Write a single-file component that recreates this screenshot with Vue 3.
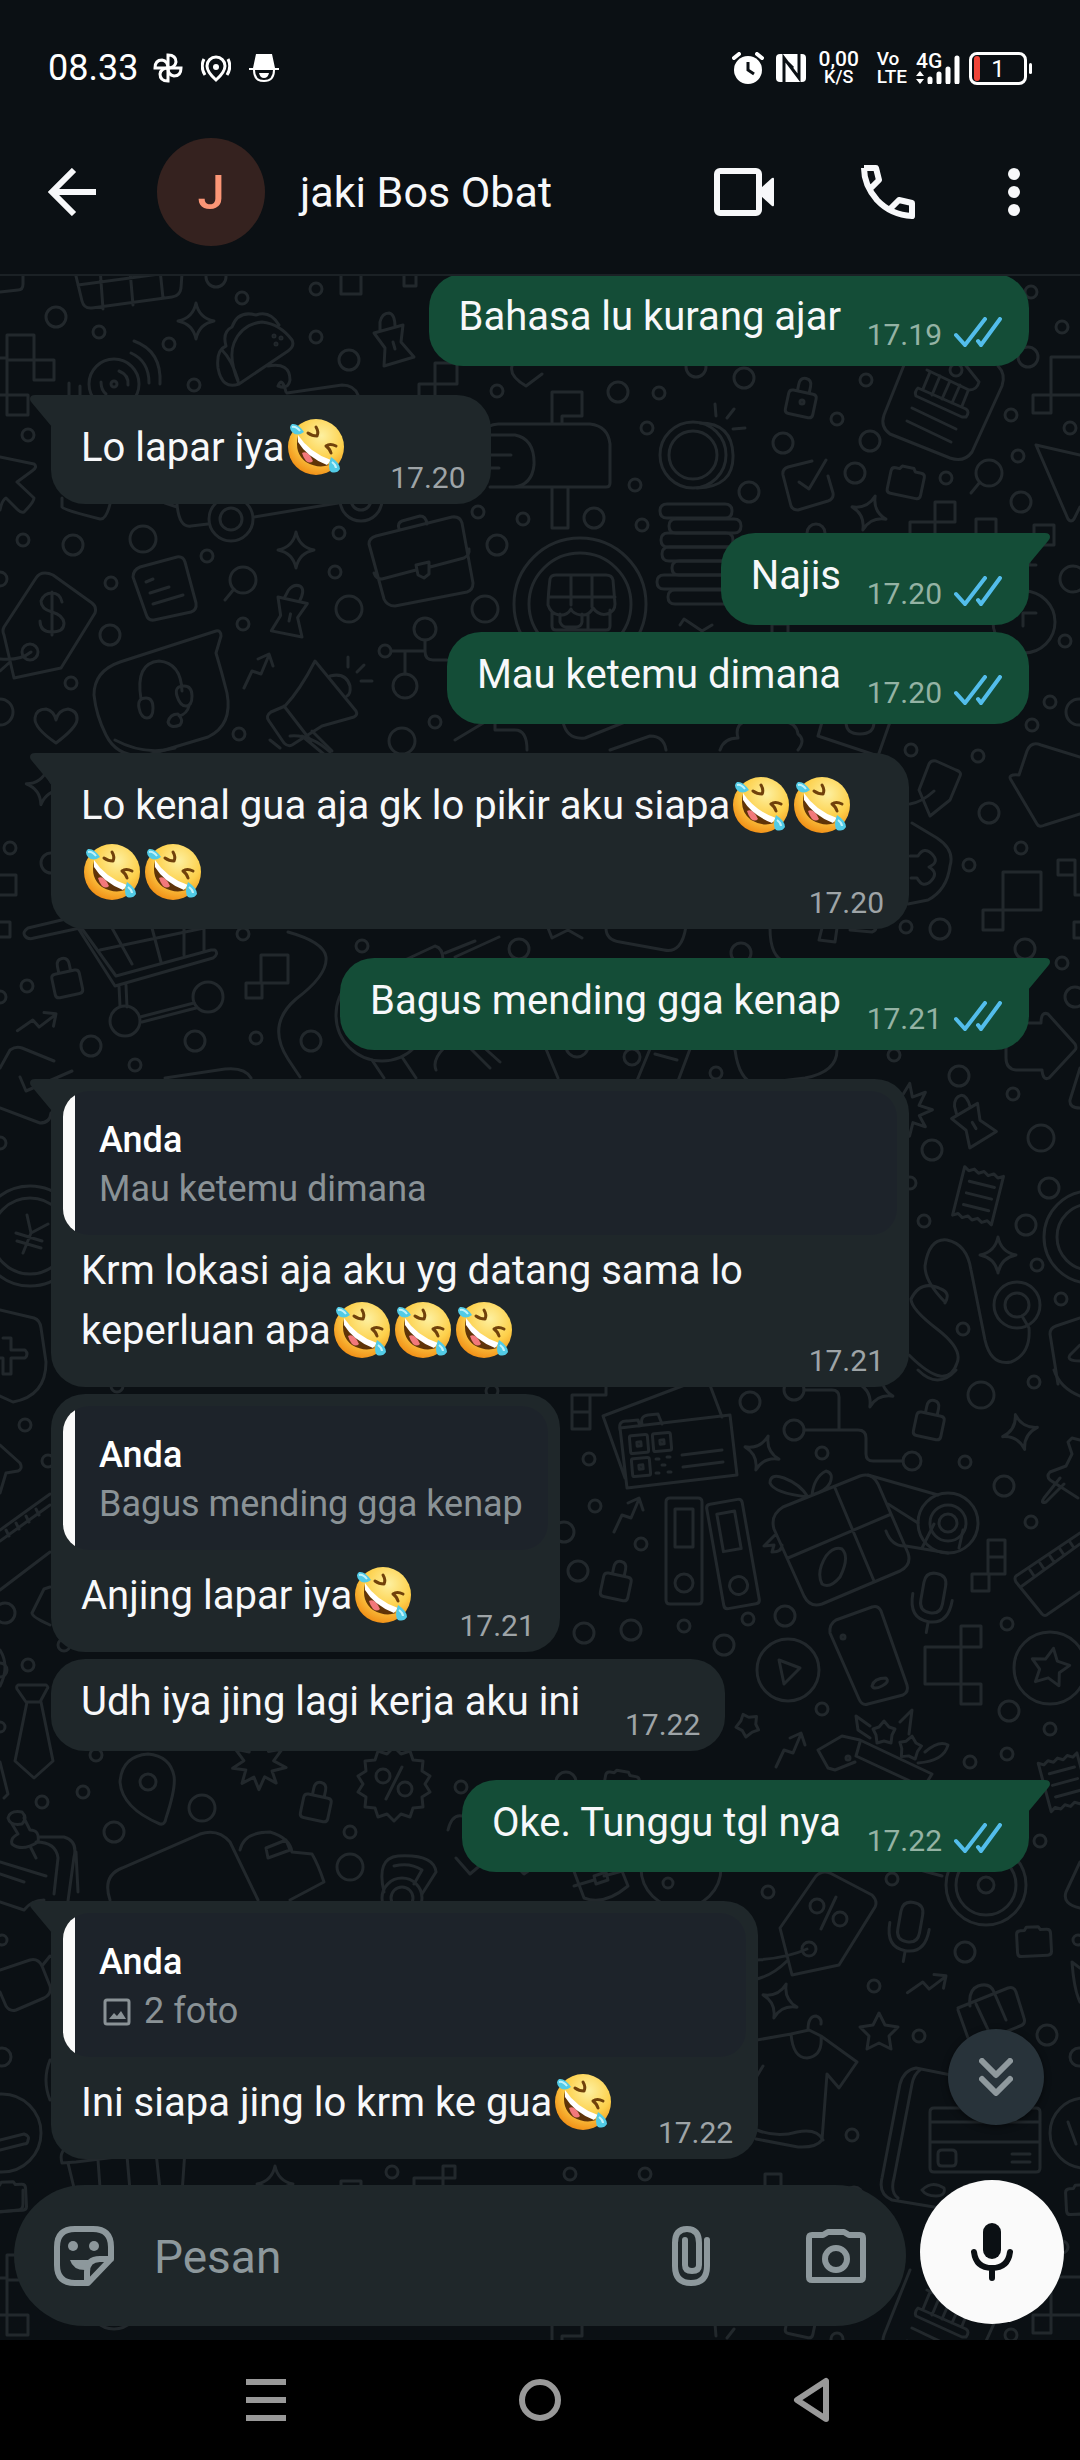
<template>
  <div class="app">
    <!-- STATUS BAR -->
    <div class="status-bar">
      <span class="clock">08.33</span>
      <svg class="status-icon" viewBox="0 0 30 30">
        <g fill="none" stroke="#fff" stroke-width="3">
          <path v-for="a in [0, 90, 180, 270]" :key="a" :transform="`rotate(${a} 15 15)`" d="M15 15V2Q23 2 23 9Q22 15 15 15" />
        </g>
      </svg>
      <svg class="status-icon" viewBox="0 0 30 30">
        <path d="M15 27Q6 19 6 13A9 9 0 0 1 24 13Q24 19 15 27ZM3 6Q-1 14 4 22M27 6Q31 14 26 22" fill="none" stroke="#fff" stroke-width="3" />
        <circle cx="15" cy="14" r="3" fill="#fff" />
      </svg>
      <svg class="status-icon" viewBox="0 0 30 30">
        <path d="M7 1H23L26 15H30V17H0V15H4ZM10 20H20Q19 25 15 25T10 20Z" fill="#fff" />
        <path d="M5 17Q5 28 15 28T25 17" fill="none" stroke="#fff" stroke-width="2" />
      </svg>
      <div class="status-right">
        <svg class="alarm" viewBox="0 0 32 32">
          <circle cx="16" cy="18" r="14" fill="#fff" />
          <path d="M2 6L7 2M30 6L25 2" stroke="#fff" stroke-width="4" stroke-linecap="round" />
          <path d="M16 10V18L22 22" fill="none" stroke="#0b1014" stroke-width="3" />
        </svg>
        <svg class="nfc" viewBox="0 0 30 28">
          <rect width="30" height="28" rx="4" fill="#fff" />
          <path d="M8 28V4L23 24V0M8 5L17 14" fill="none" stroke="#0b1014" stroke-width="3" />
        </svg>
        <div class="speed"><b>0,00</b><small>K/S</small></div>
        <div class="volte"><span>Vo</span><span>LTE</span></div>
        <div class="signal">
          <span>4G</span>
          <svg viewBox="0 0 44 32">
            <path d="M0 24L4 19L8 24ZM0 27L4 32L8 27Z" fill="#fff" />
            <path d="M14 27V30M23 22V30M32 17V30M41 6V30" stroke="#fff" stroke-width="5" stroke-linecap="round" />
          </svg>
        </div>
        <div class="battery"><i></i><span>1</span></div>
      </div>
    </div>

    <!-- HEADER -->
    <header class="header">
      <button type="button" class="back" aria-label="Kembali">
        <svg viewBox="0 0 48 48"><path d="M26 2L4 24L26 46M4 24H48" /></svg>
      </button>
      <div class="avatar">J</div>
      <h1>jaki Bos Obat</h1>
      <div class="actions">
        <button type="button" aria-label="Panggilan video">
          <svg class="video" viewBox="0 0 60 48">
            <rect x="3" y="3" width="42" height="42" rx="3" fill="none" stroke="#f7f8fa" stroke-width="6" />
            <path d="M47 20L58 10Q60 9 60 11V37Q60 39 58 38L47 28Z" fill="#f7f8fa" />
          </svg>
        </button>
        <button type="button" aria-label="Panggilan suara">
          <svg class="phone" viewBox="0 0 54 54">
            <path d="M3 3H15L18 15L9 24M3 3Q3 20 16 35Q30 50 51 51V38L38 35L30 43" fill="none" stroke="#f7f8fa" stroke-width="6" stroke-linejoin="round" />
          </svg>
        </button>
        <button type="button" aria-label="Menu">
          <svg class="dots" viewBox="0 0 24 48">
            <circle v-for="y in [6, 24, 42]" :key="y" cx="12" :cy="y" r="6" fill="#f7f8fa" />
          </svg>
        </button>
      </div>
    </header>

    <main class="chat">
      <!-- WALLPAPER -->
      <svg class="wallpaper" viewBox="0 276 1080 2064" preserveAspectRatio="xMinYMin slice" aria-hidden="true">
        <g id="tile">
          <circle v-for="(c, i) in circles" :key="'c' + i" :cx="c[0]" :cy="c[1]" :r="c[2]" />
          <path v-for="(s, i) in stamps" :key="'s' + i" :d="shapes[s[0]]" :transform="`translate(${s[1]} ${s[2]}) rotate(${s[3]})`" />
          <path v-for="(d, i) in drawings" :key="'d' + i" :d="d" />
        </g>
        <use href="#tile" y="1920" />
      </svg>

      <!-- MESSAGES -->
      <div class="messages">
        <div
          v-for="msg in messages"
          :key="msg.id"
          class="bubble"
          :class="[msg.out ? 'out' : 'in', { tail: msg.tail, tall: msg.tall, quoted: msg.quote }]"
        >
          <svg v-if="msg.tail" class="tip" viewBox="0 0 22 32">
            <path d="M22 0H5Q0 0 0 4Q0 6 2 8L22 32Z" />
          </svg>
          <div v-if="msg.quote" class="quote">
            <strong>Anda</strong>
            <span>
              <svg v-if="msg.photo" class="photo" viewBox="0 0 28 28">
                <rect x="2" y="2" width="24" height="24" rx="2" fill="none" stroke="currentColor" stroke-width="3" />
                <path d="M6 21L11 15L14 18L18 13L23 21Z" fill="currentColor" />
              </svg>{{ msg.quote }}
            </span>
          </div>
          <div class="body">
            <p>{{ msg.text }}<svg v-for="n in msg.laughs || 0" :key="n" class="emoji" viewBox="0 0 56 56" role="img" aria-label="tertawa">
                <circle cx="28" cy="28" r="28" fill="url(#face)" />
                <path d="M10 17Q6 34 18 43Q30 50 41 46Q24 36 10 17Z" fill="#5f3408" />
                <path d="M14 34Q20 31 25 42Q22 45 18 42Q15 38 14 34Z" fill="#f2787b" />
                <path d="M10 16Q22 34 43 41L39 46Q19 38 10 23Z" fill="#fff" />
                <path d="M28 8Q31 13 29 17Q24 17 20 14M48 27Q42 24 38 27Q42 30 43 34" fill="none" stroke="#70410b" stroke-width="3" stroke-linecap="round" stroke-linejoin="round" />
                <path d="M16 13Q10 4 4 5Q0 8 4 13Q9 18 16 13ZM43 38Q52 44 52 50Q49 55 43 53Q39 49 43 38Z" fill="#52cbe6" />
                <path d="M12 12Q8 7 4 8M44 43Q48 46 48 49" fill="none" stroke="#c2f3fb" stroke-width="2" />
              </svg><i class="spacer"></i></p>
            <div class="meta">
              <time>{{ msg.time }}</time>
              <svg v-if="msg.out" class="ticks" viewBox="0 0 48 30">
                <path d="M2 18L11 28L31 2M24 24L27 28L46 2" />
              </svg>
            </div>
          </div>
        </div>
      </div>

      <button type="button" class="scroll-down" aria-label="Ke bawah">
        <svg viewBox="0 0 34 38"><path d="M3 3L17 17L31 3M3 21L17 35L31 21" /></svg>
      </button>

      <!-- COMPOSER -->
      <form class="composer" @submit.prevent="send">
        <div class="field">
          <button type="button" aria-label="Stiker">
            <svg class="icon-60" viewBox="0 0 60 60">
              <path d="M21 3H39Q57 3 57 21V33L34 57H21Q3 57 3 39V21Q3 3 21 3ZM33 57V46Q33 33 46 33H57" />
              <circle class="solid" cx="19" cy="20" r="5" />
              <circle class="solid" cx="40" cy="20" r="5" />
              <path class="solid" d="M16 34H36Q31 38 31 44Q19 44 16 34Z" />
            </svg>
          </button>
          <input v-model="draft" type="text" placeholder="Pesan" aria-label="Pesan" />
          <button type="button" aria-label="Lampirkan">
            <svg class="clip" viewBox="0 0 38 60">
              <path d="M35 14V40Q35 57 19 57T3 40V17Q3 3 15 3T27 17V39Q27 45 20 45T13 39V14" />
            </svg>
          </button>
          <button type="button" aria-label="Kamera">
            <svg class="icon-60" viewBox="0 0 60 60">
              <path d="M3 12Q3 9 6 9H17L22 6H38L43 9H54Q57 9 57 12V51Q57 54 54 54H6Q3 54 3 51Z" />
              <circle cx="30" cy="33" r="11" />
            </svg>
          </button>
        </div>
        <button type="submit" class="mic" aria-label="Pesan suara">
          <svg viewBox="0 0 42 58">
            <rect x="12" width="18" height="36" rx="9" fill="#0b1014" />
            <path d="M3 29Q5 45 21 45T39 29M21 45V55" fill="none" stroke="#0b1014" stroke-width="6" stroke-linecap="round" />
          </svg>
        </button>
      </form>
    </main>

    <!-- NAVIGATION BAR -->
    <nav class="nav-bar">
      <button type="button" aria-label="Aplikasi terbaru">
        <svg viewBox="0 0 48 48"><path d="M4 6H44M4 24H44M4 42H44" /></svg>
      </button>
      <button type="button" aria-label="Beranda">
        <svg viewBox="0 0 48 48"><circle cx="24" cy="24" r="18" /></svg>
      </button>
      <button type="button" aria-label="Kembali ke sebelumnya">
        <svg viewBox="0 0 48 48"><path d="M36 5V43L7 24Z" /></svg>
      </button>
    </nav>

    <svg class="defs" aria-hidden="true">
      <radialGradient id="face" cx="0.6" cy="0.3" r="0.75">
        <stop offset="0" stop-color="#fdf0a0" />
        <stop offset="0.55" stop-color="#fdd04b" />
        <stop offset="1" stop-color="#f08a12" />
      </radialGradient>
    </svg>
  </div>
</template>

<script setup>
import { ref } from 'vue'

const draft = ref('')

const messages = ref([
  { id: 1, out: true, text: 'Bahasa lu kurang ajar', time: '17.19' },
  { id: 2, tail: true, tall: true, text: 'Lo lapar iya', laughs: 1, time: '17.20' },
  { id: 3, out: true, tail: true, text: 'Najis', time: '17.20' },
  { id: 4, out: true, text: 'Mau ketemu dimana', time: '17.20' },
  { id: 5, tail: true, tall: true, text: 'Lo kenal gua aja gk lo pikir aku siapa', laughs: 4, time: '17.20' },
  { id: 6, out: true, tail: true, text: 'Bagus mending gga kenap', time: '17.21' },
  { id: 7, tail: true, quote: 'Mau ketemu dimana', text: 'Krm lokasi aja aku yg datang sama lo keperluan apa', laughs: 3, time: '17.21' },
  { id: 8, tall: true, quote: 'Bagus mending gga kenap', text: 'Anjing lapar iya', laughs: 1, time: '17.21' },
  { id: 9, text: 'Udh iya jing lagi kerja aku ini', time: '17.22' },
  { id: 10, out: true, tail: true, text: 'Oke. Tunggu tgl nya', time: '17.22' },
  { id: 11, tail: true, tall: true, quote: '2 foto', photo: true, text: 'Ini siapa jing lo krm ke gua', laughs: 1, time: '17.22' }
])

function send() {
  const text = draft.value.trim()
  if (!text) return

  messages.value.push({ id: Date.now(), out: true, text, time: '08.33' })
  draft.value = ''
}

// closed zigzag with n tips
function burst(n, outer, inner) {
  let d = ''
  for (let i = 0; i < n * 2; i++) {
    const r = i % 2 ? inner : outer
    const a = (Math.PI * i) / n - Math.PI / 2
    d += (i ? 'L' : 'M') + Math.round(r * Math.cos(a)) + ' ' + Math.round(r * Math.sin(a))
  }
  return d + 'Z'
}

const shapes = {
  sparkle: 'M0-18Q3-3 18 0Q3 3 0 18Q-3 3-18 0Q-3-3 0-18Z',
  lock: 'M-10-6h20q4 0 4 4v16q0 4-4 4h-20q-4 0-4-4v-16q0-4 4-4zM-6-6v-7q0-7 6-7t6 7v7',
  trend: 'M-14 17L-6 0L3 3L11-16M0-12L11-17L15-5',
  pin: 'M-20-12L9-20L7-3L20 12L-10 21L-9 3ZM-14-15v-8q2-9 9-9q6 1 6 14M-1-3l2 7',
  lens: 'M13 0a13 13 0 1 0-26 0a13 13 0 1 0 26 0M-9 9L-18 20',
  pill: 'M-29-7h58q7 0 7 7t-7 7h-58q-7 0-7-7t7-7z',
  folder: 'M-16-8q0-4 4-4h4l2-3h12l2 3h6q4 0 4 4v18q0 4-4 4h-26q-4 0-4-4z',
  mic: 'M0-27q11 0 11 11v18q0 11-11 11t-11-11v-18q0-11 11-11zM-20-3q0 25 20 25t20-25M0 22v11',
  binder: 'M-14-53h28q4 0 4 4v98q0 4-4 4h-28q-4 0-4-4v-98q0-4 4-4zM-9-42h18v38h-18zM9 32a9 9 0 1 0-18 0a9 9 0 1 0 18 0',
  qr: 'M-7-9h14q2 0 2 2v14q0 2-2 2h-14q-2 0-2-2v-14q0-2 2-2zM-2-2h4v4h-4z',
  receipt: 'M-21-25l5 3 5-3 5 3 5-3 5 3 5-3 5 3 5-3v50l-5-3-5 3-5-3-5 3-5-3-5 3-5-3-5 3zM-13-12h26M-13 0h26M-13 12h26',
  star: burst(5, 20, 10),
  burst: burst(9, 27, 15),
  badge: burst(14, 37, 31),
  flower: burst(5, 12, 8)
}

const stamps = [
  ['sparkle', 196, 321, 0], ['sparkle', 296, 550, 0], ['sparkle', 869, 513, 20], ['sparkle', 998, 1255, 0],
  ['sparkle', 762, 1453, 20], ['sparkle', 1020, 1432, -15], ['sparkle', 780, 2001, 20], ['sparkle', 275, 2184, 0],
  ['sparkle', 876, 1390, 20], ['sparkle', 44, 787, 10],
  ['lock', 802, 398, 12], ['lock', 66, 978, -12], ['lock', 317, 1802, 12], ['lock', 930, 1420, 12], ['lock', 617, 1581, 12],
  ['trend', 258, 671, 0], ['trend', 38, 1023, 30], ['trend', 628, 1515, 0], ['trend', 790, 1750, 0], ['trend', 928, 1985, 30],
  ['pin', 394, 345, 0], ['pin', 290, 617, 28], ['pin', 974, 1125, -15],
  ['lens', 243, 580, 0], ['lens', 989, 473, 0],
  ['pill', 696, 511, 0], ['pill', 705, 526, 0], ['pill', 697, 540, 0], ['pill', 698, 554, 0], ['pill', 708, 568, 0], ['pill', 693, 582, 0], ['pill', 704, 597, 0],
  ['folder', 905, 482, 12], ['folder', 1033, 1942, -3], ['folder', 8, 2197, -3], ['folder', 1082, 2200, -3], ['folder', 620, 1786, 10],
  ['mic', 932, 1600, 10], ['mic', 909, 1929, 10],
  ['binder', 684, 1551, 0], ['binder', 733, 1554, -10],
  ['qr', 639, 1444, -5], ['qr', 662, 1442, -5], ['qr', 641, 1467, -5],
  ['receipt', 979, 1196, 14], ['receipt', 1065, 1782, -15],
  ['star', 1050, 1668, 10], ['star', 879, 2033, 0],
  ['burst', 259, 1763, 20], ['badge', 394, 1784, 0], ['burst', 905, 1110, 10],
  ['flower', 884, 1733, 0], ['flower', 910, 1748, 10], ['flower', 748, 1725, 45]
]

const circles = [
  [56, 317, 10], [349, 360, 10], [73, 545, 10], [110, 635, 10], [497, 545, 10], [216, 277, 10], [143, 539, 13],
  [349, 609, 13], [485, 609, 13], [402, 741, 13], [0, 579, 7], [0, 712, 13], [99, 332, 6], [242, 298, 6], [316, 289, 6],
  [316, 337, 6], [169, 344, 6], [194, 385, 6], [497, 391, 6], [28, 435, 6], [23, 540, 6], [207, 556, 6],
  [111, 583, 6], [339, 533, 6], [478, 512, 6], [523, 519, 6], [335, 572, 6], [243, 624, 6], [71, 683, 6],
  [239, 734, 6], [435, 722, 6], [618, 392, 10], [744, 378, 10], [696, 367, 10], [783, 443, 10], [870, 441, 10],
  [855, 473, 10], [749, 492, 10], [594, 518, 10], [1028, 357, 10], [1021, 502, 10], [1073, 579, 13], [816, 533, 9],
  [659, 393, 6], [647, 428, 6], [866, 380, 6], [837, 419, 6], [635, 485, 6], [642, 525, 6], [1011, 415, 6],
  [1070, 428, 6], [1018, 456, 6], [946, 478, 6], [1031, 292, 6], [1062, 327, 6], [956, 370, 6], [1065, 641, 6],
  [1050, 702, 6], [1032, 725, 6], [1079, 712, 13], [10, 848, 6], [243, 934, 6], [27, 986, 6], [256, 1038, 6],
  [135, 1065, 6], [362, 946, 6], [51, 863, 10], [91, 1046, 10], [195, 1041, 10], [311, 1041, 10], [519, 949, 10],
  [0, 997, 6], [0, 1143, 6], [911, 750, 6], [978, 756, 6], [1021, 848, 6], [969, 865, 6], [906, 927, 6], [1062, 963, 6],
  [894, 1055, 6], [716, 1073, 6], [1013, 1094, 6], [910, 1183, 6], [924, 1221, 6], [1037, 1265, 6], [1061, 1299, 6],
  [963, 1329, 6], [989, 813, 10], [940, 929, 10], [741, 953, 10], [1025, 949, 10], [1075, 997, 10], [959, 1076, 10],
  [932, 1150, 10], [1049, 1188, 10], [1026, 1225, 10], [1041, 1138, 13], [25, 1425, 6], [28, 1665, 6], [96, 1755, 6],
  [83, 1792, 6], [42, 1802, 6], [350, 1832, 6], [461, 1787, 6], [64, 1645, 6], [0, 1727, 5], [492, 1391, 6],
  [117, 1386, 6], [114, 1832, 10], [5, 1613, 10], [48, 1461, 6], [202, 1808, 13], [350, 1867, 13], [589, 1459, 6],
  [595, 1506, 6], [641, 1544, 6], [822, 1453, 6], [965, 1462, 6], [1034, 1382, 6], [1031, 1522, 6], [748, 1619, 6],
  [684, 1626, 6], [1007, 1624, 6], [822, 1709, 6], [1050, 1729, 6], [1007, 1754, 6], [970, 1762, 6], [1040, 1841, 6],
  [750, 1402, 10], [578, 1571, 10], [584, 1633, 10], [631, 1630, 10], [785, 1616, 10], [724, 1645, 10],
  [1004, 1486, 10], [1009, 1711, 10], [564, 1532, 10], [566, 1782, 10], [981, 1395, 13], [2, 1940, 5], [2, 2057, 9],
  [392, 2172, 6], [768, 1892, 6], [892, 1879, 6], [874, 1986, 6], [919, 2036, 6], [852, 2135, 6], [570, 2174, 6],
  [645, 2174, 6], [1078, 1940, 5], [965, 1952, 10], [1047, 2035, 10], [1079, 2057, 9], [854, 2196, 9],
  // bigger round things
  [114, 384, 25], [114, 384, 3], [231, 519, 22], [231, 519, 11], [361, 500, 21], [361, 500, 10], [30, 652, 8],
  [425, 629, 11], [385, 651, 6], [405, 686, 12], [693, 455, 33], [693, 455, 24], [580, 604, 66], [580, 604, 51],
  [1024, 622, 31], [125, 1021, 15], [208, 997, 15], [382, 1015, 46], [30, 1236, 50], [30, 1236, 38],
  [1090, 1237, 33], [1090, 1237, 46], [1017, 1305, 23], [1017, 1305, 12], [794, 1390, 10], [794, 1430, 10],
  [912, 1461, 9], [948, 1523, 30], [948, 1523, 18], [948, 1523, 9], [788, 1670, 31], [1050, 1668, 36],
  [148, 1782, 8], [383, 1776, 7], [405, 1789, 7], [817, 1906, 7], [840, 1919, 7], [809, 1949, 7], [986, 1885, 40],
  [986, 1885, 30], [986, 1885, 8], [402, 1898, 20], [402, 1898, 11], [681, 1868, 40], [668, 1883, 5],
  [1085, 2133, 35], [2, 2133, 39], [577, 1046, 11], [612, 1037, 10], [632, 1057, 8], [0, 1670, 7],
  [274, 336, 1], [281, 338, 1], [276, 344, 1], [802, 402, 2], [848, 1758, 2], [843, 1637, 2]
]

const drawings = [
  // pixel blocks
  'M7 335h27v25h-27zM34 360h20v20h-20zM7 360v35M0 358h7M0 395h28v20h-21v-20M341 276v18h20v-33h-20zM404 270h12v16h-12zM435 363h22v21h-22zM419 396v-12h16v12',
  'M1051 357h29M1051 357v38h29M1033 395h18v18h-18zM935 502h20v20h-20zM910 534v-12h25v12M976 534v-15h20v15M1034 525h20v20h-20zM1029 545v20h7',
  'M261 955h27v28h-27zM246 983h16v15h-16zM0 875h16v20h-16M0 922h10v15h-10M1003 872h38v38h-38zM983 910h20v20h-20zM1058 860h17v15h-17zM1075 875v20h5M1074 922h6M1074 922v16h6',
  'M572 1395h18v34h-18zM572 1412h18M590 1395h16v-12M925 1647h36v37h-36zM961 1626h20v21h-20zM961 1684h20v20h-20zM988 1540h17v34h-17zM988 1557h17M972 1574h17v17h-17zM443 2166h12v12h-12zM414 2190v-12h29v12M765 2190v-16h16v16',
  // basket
  'M62 243q-4-14 10-17l108-14q10 0 10 8q-2 8-10 9l-104 13zM68 243l14 58q2 8 10 7l80-11q8-1 9-9l4-58M78 285l104-14M98 240l5 69M127 236l6 69M156 232l7 66M0 292l18-2q5 0 5-6v-14',
  // taco, disc
  'M239 384Q228 358 234 343Q242 324 262 322Q280 324 292 340Q295 346 288 351ZM239 384Q222 390 218 368Q216 350 226 346Q222 332 232 327Q238 310 256 315Q270 310 279 325M222 350Q232 360 238 380M268 366q22-4 22 14q-2 10-12 6q4-10 8 6',
  'M134 341q28 10 26 43M131 353q18 8 18 30M119 371q10 4 9 14M101 382q0 8 5 12M69 383v14M80 386v10',
  // truck, notes
  'M287 393l55-8q12 0 16 10M177 504q2 24 14 22l17-2M254 517l84-14M165 503l12 4M0 457l34 7q4 3-2 7l-15 11l17 16q0 4-10 14q-3 1-6-2l-12-12q-4 2-6 12M62 498v9q2 3 38 12q6 1 10-15',
  'M140 567L177 557q6-1 8 5L196 603q1 7-5 9L154 620q-6 1-8-6L133 577q0-7 7-10zM146 582l7-3M150 593l19-6M153 604l30-9',
  // briefcase, price tag
  'M376 536L452 517q8-1 10 6l11 60q0 7-6 9l-72 14q-8 0-11-7l-15-55q0-6 7-8zM374 573q2 6 8 6l34-9M430 567l34-9q6-3 5-9M416 565l13-3v12l-5 4l-6-3zM399 529q-2-6 3-8l18-5q6 0 7 8',
  'M45 573q-6 0-9 5L4 627q-2 4 0 8l10 43l47-10L95 613q2-6-3-10L53 575q-4-2-8-2zM0 659q20 2 31-7M0 671l10-9M52 592v43M62 602q-2-9-10-9t-11 8q0 8 11 11t12 11q0 9-12 9t-12-11',
  // headset, heart, megaphone, nodes
  'M120 662L216 631q5-1 5 5l-5 17q6 20 11 40q6 32-19 44l-60 18q-30 4-42-20q-10-20-12-40q0-24 26-33zM141 699q-6-36 18-38q22 2 23 30M146 698q7 0 7 10t-6 10t-8-10t7-10zM184 686q8 0 8 10t-6 10t-9-10t7-10zM189 706q-2 8-10 10M168 722q2-8 10-8q6 6 2 11q-10 4-12-3z',
  'M56 743Q34 728 35 718Q36 709 46 709Q54 711 56 720Q58 710 68 709Q78 711 77 720Q76 728 56 743z',
  'M315 661L356 711q2 4-2 6l-32 9l-30 19q-4 2-8-2l-15-22q-4-5 2-9l14-6Q300 690 315 661zM284 706l27 35M302 736l24 20M312 731l20 20M330 676q16-4 20 10q1 8-3 10M348 657v10M357 672l7-7M361 681h11',
  'M392 651h33v-11M405 651v23M425 651q0 9 8 9h14',
  // mailbox, coin, bank letter
  'M500 424h90q18 2 20 20v39q0 4-4 4h-116M552 424v-32h30v24h-20v8M552 487v41h16v-41M480 435q8-12 20-11M490 435h25q20 4 19 30q-2 20-20 22M490 455h21M490 468h9M512 366q-3 10 14 20l16-12',
  'M700 423q32 0 33 32t-36 33M715 404l1 12M727 418l7-9M733 429l12-1M812 461l-24 6q-6 2-5 8l8 31q2 4 7 4l30-9q6-2 5-8l-5-17M799 482l10 7l17-29',
  'M910 350L884 415q-4 12 6 19l60 24q14 5 22-6l30-66q4-12-4-20M927 370l42 20q8 0 10-8l-24-30M918 388l48 21q4 3 0 8l-4 0-46-21q-2-4 2-8zM930 372l-7 17M940 376l-8 19M950 381l-8 18M960 385l-8 18M968 391l-6 15M912 408l44 21M907 421l44 21',
  'M1036 445l44 10M1036 445l32 74q3 4 6 0l6-12M1023 626v-13h13M680 625l4-6 18 12 10-6M772 632v-8h16v8',
  'M548 605q0-9 2-26q1-4 6-4h50q6 0 7 5l2 24q0 8-8 10t-14-6q-4 8-12 7t-10-6q-4 7-12 6t-11-10zM549 597h66M571 575v30M592 575v32M552 612v14q0 4 4 4h50q4 0 4-4v-16M560 614v8q2 5 6 5h10q5 0 6-5v-8M588 614v16',
  // pieces between the bubbles
  'M563 722q4 18 22 16l50-20M610 750l40-14q14 0 16 14M720 750q4-12 18-12q-4-14 10-18M784 722q12 0 14 12q8 6 0 16M822 722l-4 14 60 20 12-34M846 722q0 12 14 12t14-12M455 740l30-18M495 722v8h20q12 0 12 20M115 740q30 16 60 8M270 740l10 8M290 736q20-2 40 16',
  // cart
  'M70 918l-42 10q-6 4-3 8q3 4 9 2l46-10M78 928l37 58l98-28q6-4 2-8l-4 0-95 26-36-50M100 950l104-22M112 928l20 36M152 928l9 34M184 925v30M204 925v26M119 986l1 20M126 985l1 22M140 1017l54-14M142 1022l54-14',
  'M0 1068l10-18q6-4 12-2l32 13M20 1077l6 14 46-20M0 1108l40 15q10 0 11-10M288 932q36 10 38 25q2 18-30 42q-30 26-8 60l12 18M165 1078l60-9q20-2 26 9M372 1060l12 18M402 1057l14 21M405 960l30-14q8 2 8 14M445 953l30-12M455 957l44-20M436 1070q-4-10 8-22l50-4M470 1048l20 20M480 1044l20 18',
  'M548 928l4 10 16-8 14 8M606 928q0 12 14 14l44 8q18 4 22-24M770 928q0 30 16 34M822 928l-3 12 16 2 2-14M850 930l22 2q6-2 4-10M546 1049l12 29M650 1049l-14 34M690 1049l-12 32M655 1054l22 6M735 1050q4 30 20 34l50-6q32-6 32-28M1008 1000q-30 10-86 8',
  // yen coin, shield
  'M27 1215l4 18l17-9M31 1233l-8 20M16 1233l26 8M17 1241l24 7M0 1310l34 8q6 2 7 10l5 34q0 34-33 40l-13-6M3 1338h8v12h14q4 4 0 8h-14v16h-8v-16h-3',
  // right side of the quotes
  'M919 790l10-26q2-4 7-3l20 9q6 2 4 6l-10 24l-20 16zM910 804q12-2 24-13M912 823l25 15q18 12 13 28q-3 24-22 34l-20 4M910 856h8q6-10 14-2q8 8-3 13q10 6 2 14q-8 8-14-3h-6M1011 780q-4-6 8-5l8-24q4-10 14-6l39 12M1011 780l26 44q2 4 8 1l35-11',
  'M1029 1023h12q0-12 7-9l27 30q2 4 0 6l-26 28q-6 3-7-8h-26q-10-1-10-12v-14M1080 1068l-10 32q-1 8 10 8',
  'M945 1302q-20-20-20-36q4-28 22-26q20 4 24 30l14 70q6 26 26 22q20-8 18-34l-7-12M945 1303q6-10-4-14q-20-10-30 10q0 10 26 30q26 20 20 34q-10 30-48-8M1080 1318l-24 8q-6 2-6 8l8 50M1080 1345l-10 10q-4 6 10 6',
  // tickets, circuit, gift, camera
  'M603 1416l95-36h10l14 37M603 1416l22 62M620 1428L730 1415L737 1475L627 1488zM620 1430q-2-10 8-9l10-1 2 6M642 1424q-2-8 6-9l10-1 4 10M682 1455l40-5M683 1467l40-5M656 1459h3M667 1457h3M662 1465h3M656 1473h3M668 1472h3',
  'M804 1390h28q7 0 7 7v33M804 1430h54q8 0 8 8v16q0 7 7 7h30',
  'M783 1507L860 1476q12-4 18 8L908 1553q4 12-8 18L822 1604q-12 4-18-8L774 1529q-4-14 9-22zM788 1558l101-43M835 1488l39 93M842 1549q8 8-2 28q-10 12-18 7q-6-12 4-28q8-10 16-7zM808 1497q-34-4-38-14q0-10 14-5q16 6 24 19zM812 1495q2-18 14-24q8 2 4 12q-4 8-18 12M776 1534l-12 12 10-1-2 7q10 0 10-7',
  'M868 1475l70 20M888 1504l30 19M934 1524l-12 24M963 1530l-4 18M886 1531q6 16 20 15l42 7',
  'M836 1620L872 1607q6-2 9 4L907 1685q2 7-4 10L868 1704q-6 2-9-5L830 1633q-1-9 6-13zM872 1686q2-8 14-8q4 4-4 8q-8 4-10 0M779 1660l21 8-16 16z',
  'M1080 1533L1016 1576q-2 2 0 6l26 32q3 3 6 0l32-22M1022 1586l58-42M1030 1570l4 6M1040 1563l4 6M1050 1556l4 6M1060 1549l4 6M1070 1542l4 6M1080 1440l-8-2-4 4 4 12-6 12-16 6q-4 4 0 8l28 18M1060 1478l-16 20q-4 6 2 4l18-18M1054 1370q6 18 26 26M918 1370q20 20 38 0',
  // bouquet
  'M818 1750l24-14 18 4 72 34-5 8M818 1750l10 18 7 2 20-8M856 1756l56 26M860 1742l-4 14M870 1738l-12-8-2-14 14 10M900 1722l12-12-3 24M925 1752q14-12 23-7q-4 16-30 18',
  // things on the left
  'M0 1445l20 18q3 6-2 8l-12 2-6 20M0 1530l50-36M0 1541l50-36M0 1590l50-38M6 1530l3 6M16 1523l3 6M26 1516l3 6M36 1509l3 6M50 1587l-6 2-12 24q0 4 18 12M0 1650q10 16 0 36',
  'M18 1685h28q3 2 1 4l-7 13h-14l-9-13q-1-3 1-4zM27 1702l-12 59 19 17 19-17-12-59M0 1762l8 32-4 4',
  'M148 1754q-26 2-28 28q2 26 40 42q5 1 6-6q10-30 8-42q-4-20-26-22zM402 1767l-16 32M8 1818q2-8 14-6q6 6 0 12q-12 2-14-6zM12 1824l6 10q-8 4-6 10q10 8 26-2q2-12-8-12l-6-12M30 1846l6 12M40 1837h24q14 4 10 20l-6 44M36 1842q20 0 22 16l-4 36M0 1862l46 14M0 1874l24 8M0 1902l24 8q8-10 20-10M76 1852l2 40',
  'M110 1900q-8-24 12-32L200 1834q18-6 30 8l28 58M240 1850q4-18 30-18q20 6 22 20l20 2q6 10 12 28l-34 18M266 1848l20-8 4 10-22 8zM384 1892q-8-34 14-36q36-2 38 16l-14 22M394 1866q16-4 28 4l-8 14M456 1858l14 16 26-22M510 1860l14 14 20-14M448 1830q4-16 14-14',
  'M572 1866l12 32q20 8 44-12l-8-20M574 1886l20-6M604 1876l22-6M594 1876l12-4 2 8-12 4z',
  'M0 1970l30-10q8-2 12 6l8 20q2 8-6 12l-28 12q-6 2-10-4l-6-14M42 1966l8-10 4 2M50 2060q-8 20 0 40',
  // percent tag, shirt, suitcase, cards
  'M780 1928L816 1876q6-6 14-3l42 22q6 6 3 12l-36 58-47 10zM836 1897l-15 32M757 1960q30-2 50-11M757 1979q16-4 30-18M920 1870l22 6',
  'M757 2040l34-6q2 24 16 24q16-2 14-22l36 26-18 26-12-14-5 66q-6 8-24 7l-42-8M791 2034l18-4 12 6M808 2030q0-14 8-14q6 2 5 8M757 2076l6-10M757 2130q20 8 40 2q20-4 26 8',
  'M958 2008l50-20q6-2 8 4l8 26q2 6-4 8l-44 18M958 2010l10 28M970 2006q-2-16 8-20q12-4 16 6l12 28M976 2004l14 30',
  'M934 2108h102q4 0 4 4v56q0 4-4 4h-102q-4 0-4-4v-56q0-4 4-4zM930 2122h110M930 2142h110M942 2150h10q4 0 4 4v8q0 4-4 4h-10q-4 0-4-4v-8q0-4 4-4zM1012 2154h18M1012 2162h18M940 2208l-48-8q-14-6-10-22l18-94q4-14 16-16l40 8M898 2198q-8-6-4-20l18-94q2-10 8-14M922 2190q10-10 22-2q2 8-8 8q-10 0-14-6',
  'M0 2140l24-6q6 2 4 6q0 4-4 4l-24 6M1080 1968l-8-6q2 28 8 40M1068 2122l8 22M1080 1862l-14 30q-4 12 14 16'
]
</script>

<style>
body {
  background: #000;
}
</style>

<style scoped>
.app {
  height: 100vh;
  display: flex;
  flex-direction: column;
  background: #0b1014;
  color: #f7f8fa;
  font-family: Roboto, "Liberation Sans", sans-serif;
}

svg {
  display: block;
}

button {
  padding: 0;
  border: none;
  background: none;
  cursor: pointer;
}

.defs {
  width: 0;
  height: 0;
  position: absolute;
}

/* status bar */
.status-bar {
  height: 84px;
  flex: none;
  display: flex;
  align-items: center;
  gap: 18px;
  padding: 26px 48px 0;
  color: #fff;
}

.clock {
  font-size: 36px;
  line-height: 42px;
}

.status-icon {
  width: 30px;
  height: 30px;
}

.clock + .status-icon {
  margin-left: -3px;
}

.status-right {
  margin-left: auto;
  display: flex;
  align-items: center;
  gap: 12px;
}

.alarm {
  width: 32px;
  height: 32px;
}

.nfc {
  width: 30px;
  height: 28px;
}

.speed,
.volte {
  display: flex;
  flex-direction: column;
  font-weight: 500;
  line-height: 18px;
}

.speed {
  align-items: center;
  width: 42px;
  padding-right: 5px;
}

.speed b {
  font-size: 21px;
  font-weight: 500;
}

.speed small {
  font-size: 18px;
}

.volte {
  margin-right: -3px;
  font-size: 19px;
}

.signal {
  display: grid;
  margin-right: -3px;
}

.signal span,
.signal svg {
  grid-area: 1 / 1;
}

.signal span {
  font-size: 21px;
  font-weight: 500;
  line-height: 18px;
}

.signal svg {
  width: 44px;
  height: 32px;
}

.battery {
  position: relative;
  box-sizing: border-box;
  width: 58px;
  height: 33px;
  margin-right: 5px;
  border: 3px solid #fff;
  border-radius: 8px;
  font-size: 24px;
  line-height: 28px;
  text-align: center;
}

.battery i {
  position: absolute;
  left: 2px;
  top: 1px;
  width: 6px;
  height: 25px;
  border-radius: 3px;
  background: #f04438;
}

.battery::after {
  content: "";
  position: absolute;
  right: -8px;
  top: 8px;
  width: 3px;
  height: 11px;
  border-radius: 2px;
  background: #fff;
}

/* header */
.header {
  flex: none;
  height: 164px;
  display: flex;
  align-items: center;
  padding: 0 54px 0 48px;
  border-bottom: 2px solid #1b2125;
}

.back svg {
  width: 48px;
  height: 48px;
  fill: none;
  stroke: #f7f8fa;
  stroke-width: 6;
}

.avatar {
  width: 108px;
  height: 108px;
  margin: 0 35px 0 61px;
  border-radius: 50%;
  background: #35221f;
  color: #fb9676;
  font-size: 49px;
  font-weight: 500;
  line-height: 110px;
  text-align: center;
}

.header h1 {
  margin: 0;
  font-size: 43px;
  font-weight: 400;
  line-height: 50px;
}

.actions {
  margin-left: auto;
  display: flex;
  align-items: center;
  gap: 87px;
}

.video {
  width: 60px;
  height: 48px;
}

.phone {
  width: 54px;
  height: 54px;
}

.dots {
  width: 24px;
  height: 48px;
}

/* chat */
.chat {
  position: relative;
  flex: 1;
  min-height: 0;
  display: flex;
  flex-direction: column;
  overflow: hidden;
}

.wallpaper {
  position: absolute;
  inset: 0;
  width: 100%;
  height: 100%;
  fill: none;
  stroke: #22282c;
  stroke-width: 3;
  stroke-linecap: round;
  stroke-linejoin: round;
}

.messages {
  position: relative;
  flex: 1;
  min-height: 0;
  display: flex;
  flex-direction: column;
  justify-content: flex-end;
  padding: 0 51px 21px;
}

.bubble {
  --fill: #1f272a;
  position: relative;
  flex: none;
  box-sizing: border-box;
  max-width: min(858px, 88%);
  margin-top: 7px;
  border-radius: 34px;
  background: var(--fill);
}

.in {
  align-self: flex-start;
}

.out {
  --fill: #144d37;
  align-self: flex-end;
}

.tail,
.out + .in,
.in + .out {
  margin-top: 29px;
}

.in.tail {
  border-top-left-radius: 0;
}

.out.tail {
  border-top-right-radius: 0;
}

.quoted {
  padding-top: 12px;
}

.tip {
  position: absolute;
  top: 0;
  left: -21px;
  width: 22px;
  height: 32px;
  fill: var(--fill);
}

.out .tip {
  left: auto;
  right: -21px;
  transform: scaleX(-1);
}

.quote {
  display: flex;
  flex-direction: column;
  justify-content: center;
  box-sizing: border-box;
  height: 144px;
  padding: 4px 25px 0 36px;
  margin: 0 12px;
  border-radius: 26px;
  background: linear-gradient(90deg, #fafafa 12px, #1d232a 12px);
}

.quote strong,
.quote span {
  font-size: 36px;
  line-height: 49px;
}

.quote strong {
  color: #fff;
  font-weight: 500;
}

.quote span {
  display: flex;
  align-items: center;
  color: #8a9296;
}

.photo {
  width: 28px;
  height: 28px;
  margin: 0 13px 0 4px;
}

.body {
  display: grid;
  padding: 14px 25px 9px 30px;
}

.body p,
.meta {
  grid-area: 1 / 1;
}

.body p {
  margin: 0;
  padding-bottom: 11px;
  font-size: 40px;
  line-height: 58px;
}

.quote + .body {
  padding-top: 7px;
}

.tall .body p {
  padding-top: 8px;
}

.out .body {
  padding: 14px 27px 14px 30px;
}

.out .body p {
  padding-bottom: 6px;
}

.emoji {
  display: inline-block;
  width: 56px;
  height: 56px;
  margin: 2px 2px 9px 3px;
  vertical-align: -23px;
}

.spacer {
  display: inline-block;
  width: 120px;
}

.out .spacer {
  width: 161px;
}

.meta {
  align-self: end;
  justify-self: end;
  display: flex;
  align-items: flex-start;
  gap: 12px;
  color: #9ea4a7;
  font-size: 30px;
  line-height: 35px;
}

.out .meta {
  color: #94b3a4;
}

.ticks {
  width: 48px;
  height: 30px;
  fill: none;
  stroke: #53bdeb;
  stroke-width: 4;
  stroke-linecap: round;
}

.scroll-down {
  position: absolute;
  right: 36px;
  bottom: 215px;
  width: 96px;
  height: 96px;
  border-radius: 50%;
  background: #28333a;
  box-shadow: 0 2px 6px rgba(0, 0, 0, 0.5);
}

.scroll-down svg {
  width: 34px;
  height: 38px;
  margin: 0 auto;
  fill: none;
  stroke: #8f999d;
  stroke-width: 6;
  stroke-linecap: round;
  stroke-linejoin: round;
}

/* composer */
.composer {
  position: relative;
  flex: none;
  height: 146px;
  display: flex;
  align-items: flex-end;
  gap: 14px;
  padding: 0 16px 14px 14px;
}

.field {
  flex: 1;
  min-width: 0;
  height: 141px;
  box-sizing: border-box;
  display: flex;
  align-items: center;
  padding: 0 40px;
  border-radius: 71px;
  background: #1f272a;
}

.field svg {
  fill: none;
  stroke: #8d989c;
  stroke-width: 6;
  stroke-linecap: round;
  stroke-linejoin: round;
}

.field svg .solid {
  fill: #8d989c;
  stroke: none;
}

.icon-60 {
  width: 60px;
  height: 60px;
}

.clip {
  width: 38px;
  height: 60px;
  margin-right: 96px;
}

.field input {
  flex: 1;
  min-width: 0;
  margin-left: 40px;
  padding: 2px 0 0;
  border: none;
  outline: none;
  background: none;
  color: #f7f8fa;
  font-family: inherit;
  font-size: 46px;
  line-height: 60px;
}

.field input::placeholder {
  color: #8d989c;
  opacity: 1;
}

.mic {
  align-self: flex-start;
  width: 144px;
  height: 144px;
  border-radius: 50%;
  background: #fafafa;
}

.mic svg {
  width: 42px;
  height: 58px;
  margin: 0 auto;
}

/* navigation bar */
.nav-bar {
  flex: none;
  height: 120px;
  display: flex;
  align-items: center;
  justify-content: space-around;
  padding: 0 12%;
  background: #000;
}

.nav-bar svg {
  width: 48px;
  height: 48px;
  fill: none;
  stroke: #999;
  stroke-width: 6;
  stroke-linejoin: round;
}
</style>
